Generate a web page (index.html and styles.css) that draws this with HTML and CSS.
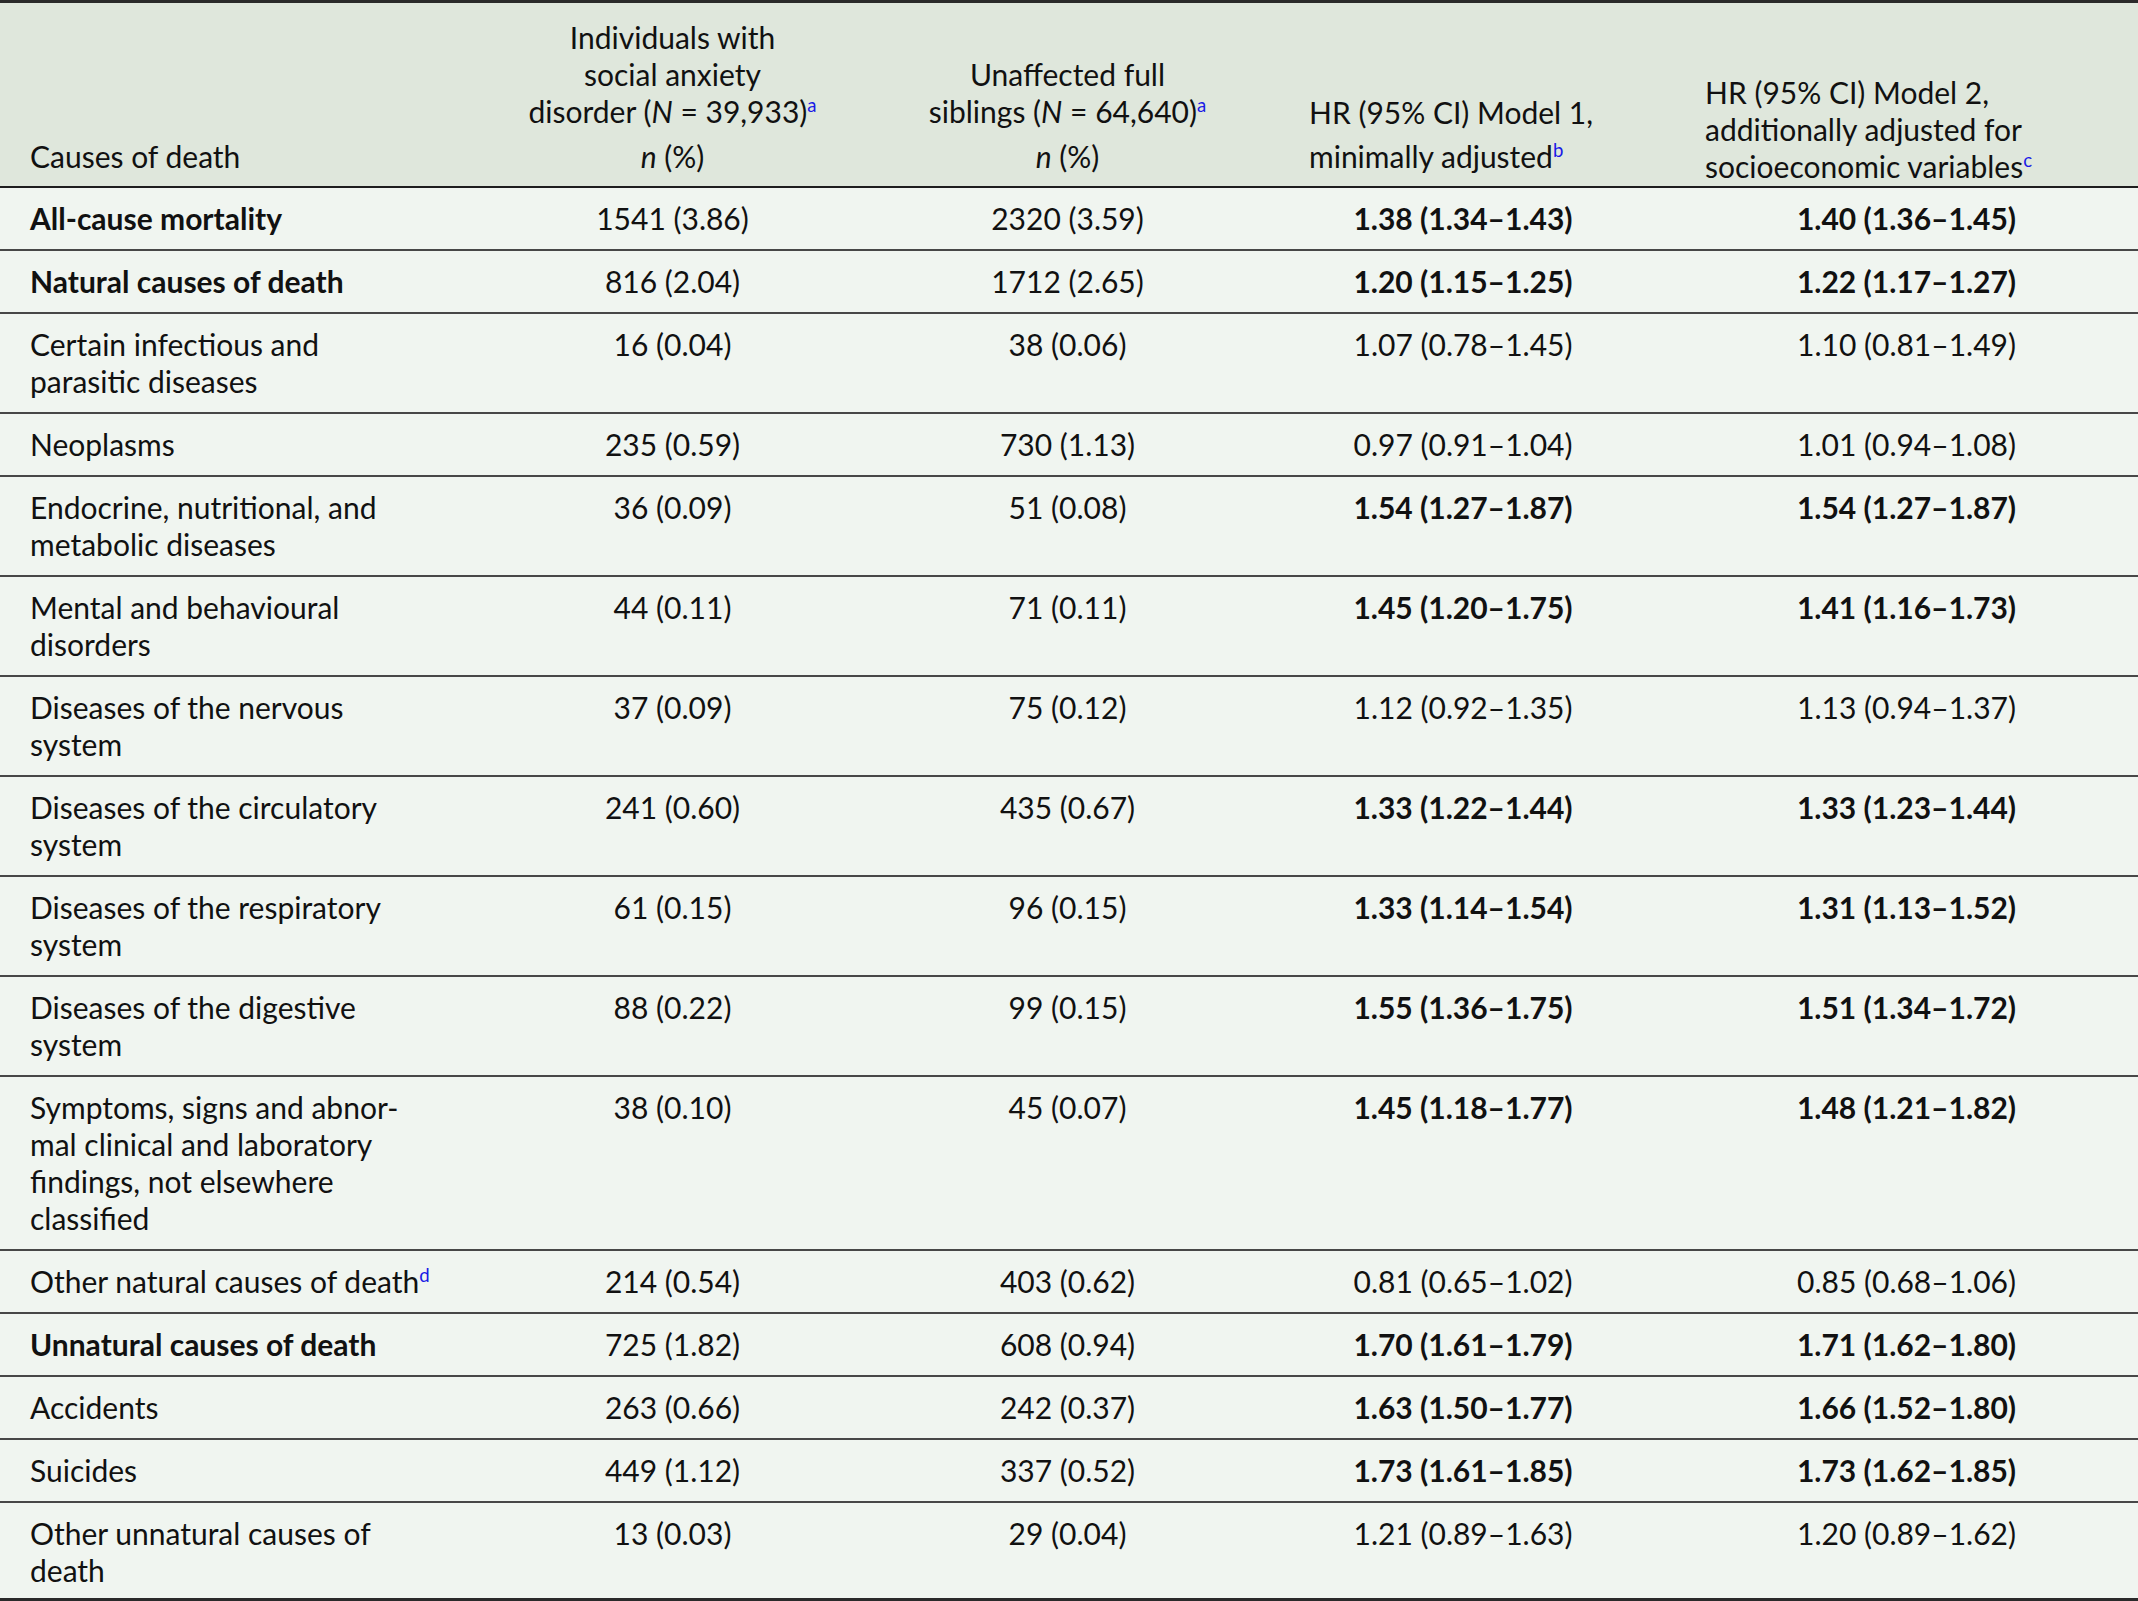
FILE: index.html
```html
<!DOCTYPE html>
<html lang="en">
<head>
<meta charset="utf-8">
<title>Causes of death – social anxiety disorder</title>
<link rel="stylesheet" href="styles.css">
</head>
<body>
<table class="mort">
  <colgroup>
    <col class="col-cause">
    <col class="col-n">
    <col class="col-n">
    <col class="col-hr">
    <col class="col-hr2">
  </colgroup>
  <thead>
    <tr>
      <th class="h-cause">Causes of death</th>
      <th class="h-n">
        <span class="h-title">Individuals with<br>social anxiety<br>disorder (<i>N</i> = 39,933)<sup>a</sup></span>
        <span class="h-unit"><i>n</i> (%)</span>
      </th>
      <th class="h-n">
        <span class="h-title">Unaffected full<br>siblings (<i>N</i> = 64,640)<sup>a</sup></span>
        <span class="h-unit"><i>n</i> (%)</span>
      </th>
      <th class="h-hr">
        <span class="h-line">HR (95% CI) Model 1,</span>
        <span class="h-line h-line-gap">minimally adjusted<sup>b</sup></span>
      </th>
      <th class="h-hr h-hr2">HR (95% CI) Model 2,<br>additionally adjusted for<br>socioeconomic variables<sup>c</sup></th>
    </tr>
  </thead>
  <tbody>
    <tr>
      <td class="cause b">All-cause mortality</td>
      <td>1541 (3.86)</td>
      <td>2320 (3.59)</td>
      <td class="b">1.38 (1.34–1.43)</td>
      <td class="m2 b">1.40 (1.36–1.45)</td>
    </tr>
    <tr>
      <td class="cause b">Natural causes of death</td>
      <td>816 (2.04)</td>
      <td>1712 (2.65)</td>
      <td class="b">1.20 (1.15–1.25)</td>
      <td class="m2 b">1.22 (1.17–1.27)</td>
    </tr>
    <tr>
      <td class="cause">Certain infectious and<br>parasitic diseases</td>
      <td>16 (0.04)</td>
      <td>38 (0.06)</td>
      <td>1.07 (0.78–1.45)</td>
      <td class="m2">1.10 (0.81–1.49)</td>
    </tr>
    <tr>
      <td class="cause">Neoplasms</td>
      <td>235 (0.59)</td>
      <td>730 (1.13)</td>
      <td>0.97 (0.91–1.04)</td>
      <td class="m2">1.01 (0.94–1.08)</td>
    </tr>
    <tr>
      <td class="cause">Endocrine, nutritional, and<br>metabolic diseases</td>
      <td>36 (0.09)</td>
      <td>51 (0.08)</td>
      <td class="b">1.54 (1.27–1.87)</td>
      <td class="m2 b">1.54 (1.27–1.87)</td>
    </tr>
    <tr>
      <td class="cause">Mental and behavioural<br>disorders</td>
      <td>44 (0.11)</td>
      <td>71 (0.11)</td>
      <td class="b">1.45 (1.20–1.75)</td>
      <td class="m2 b">1.41 (1.16–1.73)</td>
    </tr>
    <tr>
      <td class="cause">Diseases of the nervous<br>system</td>
      <td>37 (0.09)</td>
      <td>75 (0.12)</td>
      <td>1.12 (0.92–1.35)</td>
      <td class="m2">1.13 (0.94–1.37)</td>
    </tr>
    <tr>
      <td class="cause">Diseases of the circulatory<br>system</td>
      <td>241 (0.60)</td>
      <td>435 (0.67)</td>
      <td class="b">1.33 (1.22–1.44)</td>
      <td class="m2 b">1.33 (1.23–1.44)</td>
    </tr>
    <tr>
      <td class="cause">Diseases of the respiratory<br>system</td>
      <td>61 (0.15)</td>
      <td>96 (0.15)</td>
      <td class="b">1.33 (1.14–1.54)</td>
      <td class="m2 b">1.31 (1.13–1.52)</td>
    </tr>
    <tr>
      <td class="cause">Diseases of the digestive<br>system</td>
      <td>88 (0.22)</td>
      <td>99 (0.15)</td>
      <td class="b">1.55 (1.36–1.75)</td>
      <td class="m2 b">1.51 (1.34–1.72)</td>
    </tr>
    <tr>
      <td class="cause">Symptoms, signs and abnor-<br>mal clinical and laboratory<br>findings, not elsewhere<br>classified</td>
      <td>38 (0.10)</td>
      <td>45 (0.07)</td>
      <td class="b">1.45 (1.18–1.77)</td>
      <td class="m2 b">1.48 (1.21–1.82)</td>
    </tr>
    <tr>
      <td class="cause">Other natural causes of death<sup>d</sup></td>
      <td>214 (0.54)</td>
      <td>403 (0.62)</td>
      <td>0.81 (0.65–1.02)</td>
      <td class="m2">0.85 (0.68–1.06)</td>
    </tr>
    <tr>
      <td class="cause b">Unnatural causes of death</td>
      <td>725 (1.82)</td>
      <td>608 (0.94)</td>
      <td class="b">1.70 (1.61–1.79)</td>
      <td class="m2 b">1.71 (1.62–1.80)</td>
    </tr>
    <tr>
      <td class="cause">Accidents</td>
      <td>263 (0.66)</td>
      <td>242 (0.37)</td>
      <td class="b">1.63 (1.50–1.77)</td>
      <td class="m2 b">1.66 (1.52–1.80)</td>
    </tr>
    <tr>
      <td class="cause">Suicides</td>
      <td>449 (1.12)</td>
      <td>337 (0.52)</td>
      <td class="b">1.73 (1.61–1.85)</td>
      <td class="m2 b">1.73 (1.62–1.85)</td>
    </tr>
    <tr class="last">
      <td class="cause">Other unnatural causes of<br>death</td>
      <td>13 (0.03)</td>
      <td>29 (0.04)</td>
      <td>1.21 (0.89–1.63)</td>
      <td class="m2">1.20 (0.89–1.62)</td>
    </tr>
  </tbody>
</table>
</body>
</html>
```

FILE: styles.css
```css
html, body {
  margin: 0;
  padding: 0;
  background: #f0f5f0;
}

body {
  font-family: Lato, "Source Sans Pro", "Liberation Sans", sans-serif;
  font-size: 30px;
  line-height: 37px;
  color: #111;
}

.mort {
  width: 2138px;
  table-layout: fixed;
  border-collapse: collapse;
  border-top: 3px solid #2a2a2a;
}

.col-cause { width: 475px; }
.col-n { width: 395px; }
.col-hr { width: 396px; }
.col-hr2 { width: 477px; }

.mort thead th {
  background: #dfe7dc;
  font-weight: 400;
  vertical-align: bottom;
  text-align: center;
  padding: 16px 10px 11px;
  border-bottom: 2px solid #1e1e1e;
}

.mort thead th.h-cause {
  text-align: left;
  padding-left: 30px;
}

.mort thead th.h-hr {
  text-align: left;
  padding-left: 44px;
  white-space: nowrap;
}

.mort thead th.h-hr2 {
  padding-bottom: 1px;
}

.h-line {
  display: block;
}

.h-line-gap {
  margin-top: 7px;
}

.h-title {
  display: block;
  white-space: nowrap;
}

.h-unit {
  display: block;
  margin-top: 8px;
}

.mort td {
  text-align: center;
  vertical-align: top;
  padding: 12px 10px 12px;
  border-bottom: 2px solid #474747;
  white-space: nowrap;
}

.mort td.m2 {
  padding-left: 24px;
}

.mort td.cause {
  text-align: left;
  padding-left: 30px;
}

.mort .b {
  font-weight: 700;
}

.mort tr.last td {
  padding-bottom: 9px;
  border-bottom: 3px solid #2a2a2a;
}

sup {
  font-size: 0.62em;
  line-height: 0;
  vertical-align: super;
  color: #1a1ae6;
}

i {
  font-style: italic;
}
```
